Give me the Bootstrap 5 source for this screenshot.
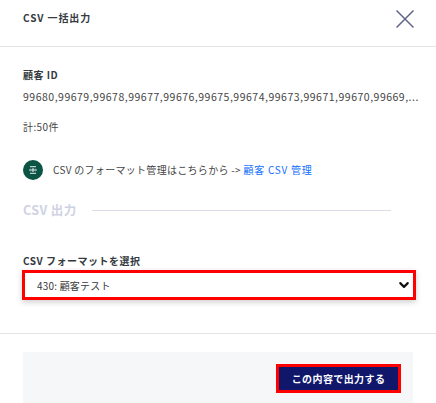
<!DOCTYPE html>
<html lang="ja"><head><meta charset="utf-8">
<link href="https://cdn.jsdelivr.net/npm/bootstrap@5.3.0/dist/css/bootstrap.min.css" rel="stylesheet">
<style>
html,body{height:403px;overflow:hidden;background:#fff}
body{font-family:"Noto Sans CJK JP","Noto Sans",sans-serif;font-size:10px;color:#454545}
.hd{height:47px;padding:10px 22px 0 23px;border-bottom:1px solid #e4e4e4}
.hd-title{font-size:10px;font-weight:700;color:#343a40;letter-spacing:.9px;line-height:16px}
.x-ic{width:18px;height:18px}
.bd{padding:20px 23px 0}
.lbl{font-size:10px;font-weight:700;color:#343a40;line-height:15px;letter-spacing:.5px}
.ids{font-size:10.5px;line-height:15px;margin-top:7px;letter-spacing:.5px;white-space:nowrap}
.total{line-height:15px;margin-top:15px;letter-spacing:.4px}
.fmt{margin-top:26px;height:20px}
.circ{width:20px;height:20px;background:#0b5345}
.fmt-t{margin:0 0 2px 10px;letter-spacing:.3px}
.fmt-t a{color:#0d6efd;text-decoration:none;letter-spacing:.75px}
.sec{margin-top:20px;height:20px;padding-right:22px}
.sec-t{font-size:12.5px;font-weight:700;color:#cfd2e3;margin-right:15px;letter-spacing:.4px}
.sec-l{height:1px;background:#dcdde8}
.sel-lbl{margin-top:33px}
.sel{height:30px;margin:2px 0 0 -1px;width:calc(100% + 4px);border:3px solid #f00;border-radius:0;padding:0 12px;font-size:10px;color:#3a3a3a;box-shadow:0 2px 6px rgba(0,0,0,.2);background-position:right 3px center;background-size:12px 10px;font-family:inherit;letter-spacing:.2px;background-image:url("data:image/svg+xml,%3csvg xmlns='http://www.w3.org/2000/svg' viewBox='0 0 16 16'%3e%3cpath fill='none' stroke='%23111' stroke-linecap='round' stroke-linejoin='round' stroke-width='3.4' d='m2 5 6 6 6-6'/%3e%3c/svg%3e")}
.sep{border-top:1px solid #e4e4e4;margin-top:33px}
.ft{margin:18px 23px 0;height:60px;background:#f6f7f9;padding:12px 12px 0 0}
.go{background:#10176b;color:#fff;border:3px solid #f00;border-radius:0;font-size:10px;font-weight:700;height:29px;width:125px;padding:0;letter-spacing:.4px}
.go:hover{background:#10176b;color:#fff;border-color:#f00}
</style></head><body>
<div class="hd d-flex align-items-start justify-content-between">
<div class="hd-title">CSV 一括出力</div>
<svg class="x-ic" viewBox="0 0 18 18"><path d="M.5.5 17.5 17.5M17.5.5 .5 17.5" stroke="#61648a" stroke-width="1.5" fill="none"/></svg>
</div>
<div class="bd">
<div class="lbl">顧客 ID</div>
<div class="ids">99680,99679,99678,99677,99676,99675,99674,99673,99671,99670,99669,...</div>
<div class="total">計:50件</div>
<div class="fmt d-flex align-items-center">
<div class="circ rounded-circle d-flex align-items-center justify-content-center">
<svg width="8" height="8" viewBox="0 0 8 8"><path d="M1 .7h6M1 7.3h6M1.4 2.8.8 4l.6 1.2M6.6 2.8 7.2 4l-.6 1.2M3 3h2v2H3z" stroke="#fff" stroke-width=".9" fill="none"/></svg>
</div>
<div class="fmt-t">CSV のフォーマット管理はこちらから -&gt; <a href="#">顧客 CSV 管理</a></div>
</div>
<div class="sec d-flex align-items-center"><div class="sec-t">CSV 出力</div><div class="sec-l flex-grow-1"></div></div>
<div class="lbl sel-lbl">CSV フォーマットを選択</div>
<select class="form-select sel"><option>430: 顧客テスト</option></select>
</div>
<div class="sep"></div>
<div class="ft d-flex justify-content-end align-items-start"><button class="btn go">この内容で出力する</button></div>
</body></html>
